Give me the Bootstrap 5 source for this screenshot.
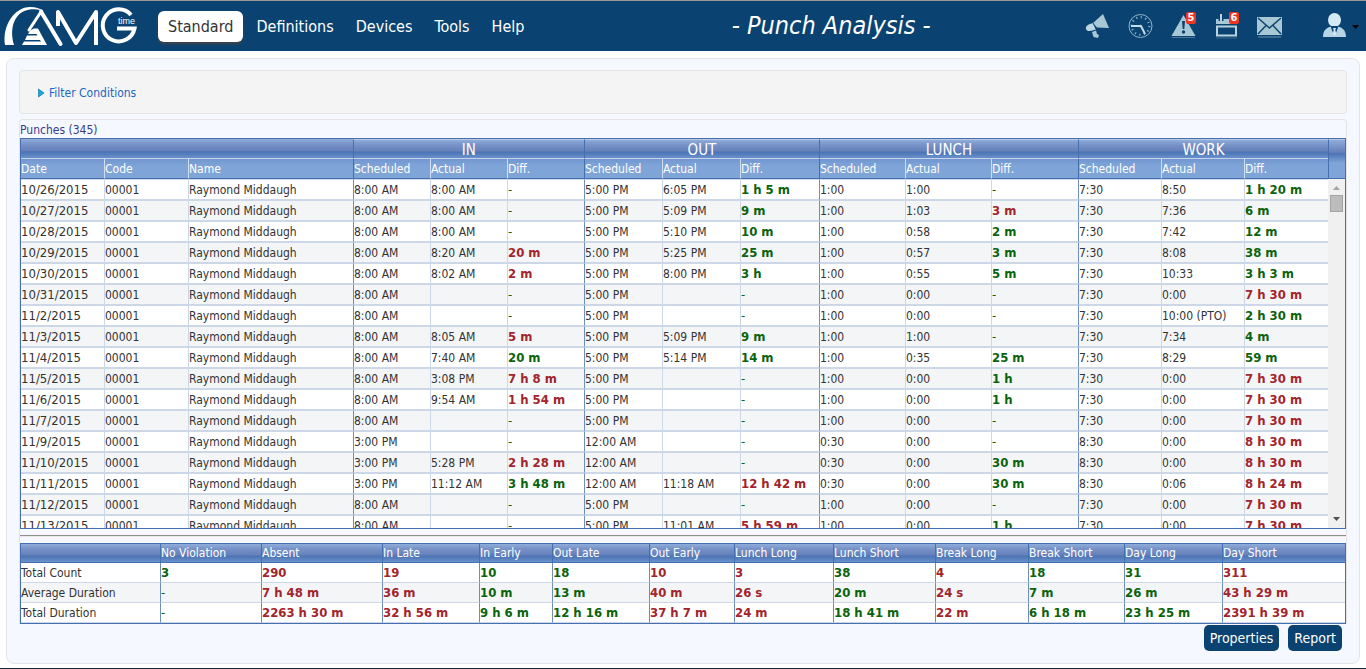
<!DOCTYPE html>
<html lang="en">
<head>
<meta charset="utf-8">
<meta name="viewport" content="width=device-width, initial-scale=1">
<title>Punch Analysis</title>
<link href="https://cdn.jsdelivr.net/npm/bootstrap@5.3.0/dist/css/bootstrap.min.css" rel="stylesheet">
<style>
:root{--navy:#0a4372;--edge:#466fb0;--rule:#ccd7e8;--group:#6d8fbf;--soft:#e2e4e8}
body{font-family:"DejaVu Sans Condensed","Noto Sans",sans-serif;font-size:12px;line-height:18px;color:#333;background:#fff}
.topbar{background:var(--navy);border-top:1px solid #999;height:51px;padding:0 7px 0 0}
.topbar .nav-link{color:#fff;font-size:16px;line-height:24px;padding:4px 11px 2px}
.topbar .nav-link.active{color:#333;background:#fff;border-radius:6px;padding:4px 10px 3px;margin-right:2px;box-shadow:0 2px 3px #444}
.page-title{font-size:25px;line-height:30px;font-style:italic;font-weight:400;color:#fff;padding-left:42px}
.tool{position:relative;width:25px;height:26px;padding:0;border:0;background:none;display:block}
.tool svg{display:block}
.tool .tally{position:absolute;top:-1px;right:0;width:10px;height:12px;border-radius:2px;background:#ee3425;color:#fff;font:bold 11px/12px "DejaVu Sans Condensed",sans-serif;text-align:center}
.user-btn{border:0;background:none;padding:0}
.frame{margin:7px 6px 4px;padding:11px 12px 12px;border:1px solid var(--soft);border-radius:8px;background:#f5f9ff}
.filter-box{background:#f4f4f4;border:1px solid #e4e4e4;border-radius:4px;height:44px;padding:2px 0 0 18px;margin-bottom:5px}
.filter-box a{color:#2266bf}
.panel{border:1px solid #e4e4e4;border-bottom:0;border-radius:4px 4px 0 0}
.panel-title{font-size:12px;line-height:16px;padding-top:2px;color:#3b3b8c;margin:0;font-weight:400}
.sheet{border:1px solid var(--edge)}
.sheet table{table-layout:fixed;width:100%;border-collapse:separate;border-spacing:0}
.sheet th,.sheet td{padding:0;white-space:nowrap;overflow:hidden;font-weight:400}
.sheet th{color:#fff}
.glossy,.summary thead th{background:linear-gradient(#8fadd9 0,#7994c9 25%,#6680ba 60%,#4c74b5 68%,#6a92cc 100%)}
.head th.glossy{height:20px;font-size:15px;line-height:16px;padding-top:2px;text-align:center;border-bottom:1px solid #c5d3ea}
.head th.span-group{border-left:1px solid var(--edge);border-top:1px solid #b8c9e6}
.head th.bar-cap{border-bottom:1px solid var(--edge);background:linear-gradient(#8fadd9 0,#6680ba 32%,#4c74b5 36%,#7fa4d8 60%,#7fa4d8 100%)}
.head th.sub{height:20px;line-height:17px;padding-top:2px;border-left:1px solid #d0dcf0;border-bottom:1px solid var(--edge);background:linear-gradient(#7297d0,#7fa4d8 35%)}
.head th.sub:first-child{border-left:0}
.head th.sub.lead-col{border-left-color:var(--edge)}
.rows{height:349px;overflow:hidden;background:#f0f0f0}
.rows td{height:21px;line-height:17px;padding-top:2px;background:#fff;border-left:1px solid var(--rule);border-top:1px solid var(--rule);border-bottom:1px solid var(--rule)}
.rows tr:nth-child(even) td{background:#f3f5f7}
.rows td:first-child{border-left:0;font-size:13px}
.rows td:first-child,.rows td.good,.rows td.bad{line-height:19px;padding-top:0}
.rows td.lead-col{border-left-color:var(--group)}
.good,.bad{font-size:13px}
.good{color:#0b630b}
.bad{color:#a3242c}
.sheet strong{font-weight:700}
.scroll-track{width:17px;flex:none;padding:7px 0 7px}
.scroll-track svg{display:block}
.scroll-thumb{width:13px;height:17px;background:#bcbcbc;border:1px solid #a3a3a3;margin-top:5px}
.c-date{width:83px}.c-code{width:84px}.c-in{width:77px}.c-out{width:78px}.c-outd{width:79px}.c-lun{width:86px}.c-lund{width:87px}.c-wrk{width:83px}.c-wrkd{width:84px}.c-bar{width:17px}
.splitter{border:0;border-top:1px solid #8f8f8f;border-bottom:1px solid #e8e8e8;opacity:1;margin:6px 0}
.summary thead th{height:19px;line-height:18px;border-left:1px solid var(--edge);border-bottom:1px solid var(--edge)}
.summary td{height:20px;line-height:19px;background:#fff;border-left:1px solid var(--group);border-bottom:1px solid var(--rule)}
.summary tbody th{color:#333;background:#fff;height:20px;line-height:17px;padding-top:2px;border-bottom:1px solid var(--rule)}
.summary tbody tr:nth-child(even) td,.summary tbody tr:nth-child(even) th{background:#f3f5f7}
.summary thead th:first-child{border-left:0}
.s-98{width:98px}.s-101{width:101px}.s-121{width:121px}.s-97{width:97px}.s-73{width:73px}.s-85{width:85px}.s-99{width:99px}.s-102{width:102px}.s-93{width:93px}.s-96{width:96px}.s-123{width:123px}
.actions{margin-top:1px;gap:9px;padding-right:5px}
.btn-navy,.btn-navy:hover{background:var(--navy);color:#fff;font-size:14px;line-height:26px;padding:0 6px;border:0;border-radius:5px}
.page-end{height:1px;background:#152c42}
</style>
</head>
<body>
<header class="topbar d-flex align-items-center">
  <a href="#" aria-label="AMG time" class="me-3"><svg width="138" height="50" viewBox="0 0 138 50" fill="none" stroke="#fff">
    <path d="M5 44C2 24 15 6 30 6C36 6 40 7.500 42 9.500C38 8.500 34 8 30 8.500C16 10 8.500 25 14 44Z" fill="#fff" stroke="none"/>
    <path d="M41 10.500 60.500 43" stroke-width="4" stroke-linecap="round"/>
    <path d="M41.500 10 29 29" stroke-width="3" stroke-linecap="round"/>
    <path d="M34 27.500H38L47 44H22L24 40.500H41L40 39H25L27 34.500H37.500L36.500 33H28L30 29.500Z" fill="#fff" stroke="none"/>
    <path d="M58 25V11L76 42 96 11V44" stroke-width="4" stroke-linejoin="round"/>
    <path d="M131 14A16 16 0 1 0 134.500 27.500H117" stroke-width="4"/>
    <text x="118" y="23" font-family="Liberation Sans, sans-serif" font-size="9" fill="#fff" stroke="none">time</text>
  </svg></a>
  <nav class="nav align-items-center ms-1">
    <a class="nav-link active" href="#" aria-current="page">Standard</a>
    <a class="nav-link" href="#">Definitions</a>
    <a class="nav-link" href="#">Devices</a>
    <a class="nav-link" href="#">Tools</a>
    <a class="nav-link" href="#">Help</a>
  </nav>
  <h1 class="page-title flex-grow-1 text-center text-nowrap mb-0">- Punch Analysis -</h1>
  <div class="d-flex align-items-center gap-3">
    <div class="d-flex" style="gap:18px">
      <button class="tool" type="button" aria-label="Announcements"><svg width="25" height="26" viewBox="0 0 25 26" fill="#a9c8d6"><path d="M18 1 24 15 12 14.500 8 10Z"/><path d="M8 10C4 11 0 13 1 16C2 19 6 18 9 17L11 16.500 8 10Z" fill="#bdd7e2"/><path d="M7 19 11 17.500 12 21 14 22 13 25 8.500 24Z"/><path d="M8 10 11.500 17" stroke="#0a4372" stroke-width=".8"/></svg></button>
      <button class="tool" type="button" aria-label="Time clock"><svg width="25" height="26" viewBox="0 0 25 26" fill="none" stroke="#8fb4c8"><circle cx="12.500" cy="13" r="11.500"/><circle cx="12.500" cy="13" r="8.800" stroke-width="2.200" stroke-dasharray="1.100 3.507"/><path d="M3 13H12" stroke="#c3dce6" stroke-width="2"/><path d="M13 13 17 21" stroke="#c3dce6" stroke-width="2"/><circle cx="12.500" cy="13" r="1.300" fill="#c3dce6" stroke="none"/></svg></button>
      <button class="tool" type="button" aria-label="Alerts"><svg width="25" height="26" viewBox="0 0 25 26"><path d="M12.500 2 24.500 23H.5Z" fill="#a9c8d6"/><path d="M11 8h3l-.7 8h-1.600Z" fill="#0a4372"/><circle cx="12.500" cy="19" r="1.700" fill="#0a4372"/><path d="M1 24.500h23" stroke="#4d7797"/></svg><span class="tally">5</span></button>
      <button class="tool" type="button" aria-label="Calendar"><svg width="25" height="26" viewBox="0 0 25 26"><path d="M2 6h21v5H2Z" fill="#a9c8d6"/><path d="M3 13.500h19v9H3Z" fill="none" stroke="#b9d3df" stroke-width="2"/><path d="M7 1v7" stroke="#0a4372" stroke-width="5"/><path d="M7 1v7" stroke="#b9d3df" stroke-width="2"/><path d="M2 25h21" stroke="#3d6a8c"/></svg><span class="tally">6</span></button>
      <button class="tool" type="button" aria-label="Messages"><svg width="25" height="26" viewBox="0 0 25 26"><path d="M0 4h25v18H0Z" fill="#a9c8d6"/><path d="M1 5 12.500 15 24 5M1 21 9 12.500M24 21 16 12.500" fill="none" stroke="#0f466f" stroke-width="1.500"/><path d="M1 24h23" stroke="#3d6a8c" stroke-width="2"/></svg></button>
    </div>
    <button class="user-btn d-flex align-items-center ms-4" type="button" aria-label="Account"><svg width="37" height="26" viewBox="0 0 37 26"><path d="M1 24C1 17 5 14.500 9 13.500L12.500 22 16 13.500C20 14.500 24 17 24 24Z" fill="#b5d4e4"/><ellipse cx="12.500" cy="7" rx="6.500" ry="7" fill="#d3eaf5"/><path d="M8.500 13 12.500 24 16.500 13Z" fill="#0a4372"/><path d="M11 15h3l-.7 2 1 4-1.800 3-1.800-3 1-4Z" fill="#d3eaf5"/><path d="M30 12h7l-3.500 4Z" fill="#000"/></svg></button>
  </div>
</header>

<main class="frame">
  <section class="filter-box d-flex align-items-center">
    <a href="#" class="d-flex align-items-center text-decoration-none"><svg width="11" height="10" viewBox="0 0 11 10"><path d="M.5 1 6 5 .5 9Z" fill="#1ba5d8" stroke="#1679a8" stroke-width=".7"/></svg>Filter Conditions</a>
  </section>
  <section class="panel">
    <h2 class="panel-title">Punches (345)</h2>
    <div class="sheet">
      <table class="head">
        <colgroup><col class="c-date"><col class="c-code"><col><col class="c-in"><col class="c-in"><col class="c-in"><col class="c-out"><col class="c-out"><col class="c-outd"><col class="c-lun"><col class="c-lun"><col class="c-lund"><col class="c-wrk"><col class="c-wrk"><col class="c-wrkd"><col class="c-bar"></colgroup>
        <tr><th class="glossy" colspan="3"></th><th class="glossy span-group" colspan="3">IN</th><th class="glossy span-group" colspan="3">OUT</th><th class="glossy span-group" colspan="3">LUNCH</th><th class="glossy span-group" colspan="3">WORK</th><th class="bar-cap span-group" rowspan="2"></th></tr>
        <tr><th class="sub">Date</th><th class="sub">Code</th><th class="sub">Name</th><th class="sub lead-col">Scheduled</th><th class="sub">Actual</th><th class="sub">Diff.</th><th class="sub lead-col">Scheduled</th><th class="sub">Actual</th><th class="sub">Diff.</th><th class="sub lead-col">Scheduled</th><th class="sub">Actual</th><th class="sub">Diff.</th><th class="sub lead-col">Scheduled</th><th class="sub">Actual</th><th class="sub">Diff.</th></tr>
      </table>
      <div class="rows d-flex">
        <div class="flex-grow-1">
          <table>
            <colgroup><col class="c-date"><col class="c-code"><col><col class="c-in"><col class="c-in"><col class="c-in"><col class="c-out"><col class="c-out"><col class="c-outd"><col class="c-lun"><col class="c-lun"><col class="c-lund"><col class="c-wrk"><col class="c-wrk"><col class="c-wrkd"></colgroup>
            <tbody id="punches"></tbody>
          </table>
        </div>
        <div class="scroll-track d-flex flex-column align-items-center">
          <svg width="7" height="4" viewBox="0 0 7 4"><path d="M0 4h7L3.500 0Z" fill="#a3a3a3"/></svg>
          <div class="scroll-thumb"></div>
          <svg class="mt-auto" width="7" height="4" viewBox="0 0 7 4"><path d="M0 0h7L3.500 4Z" fill="#505050"/></svg>
        </div>
      </div>
    </div>
    <hr class="splitter">
    <div class="sheet">
      <table class="summary">
        <colgroup><col><col class="s-101"><col class="s-121"><col class="s-97"><col class="s-73"><col class="s-97"><col class="s-85"><col class="s-99"><col class="s-102"><col class="s-93"><col class="s-96"><col class="s-98"><col class="s-123"></colgroup>
        <thead><tr><th></th><th>No Violation</th><th>Absent</th><th>In Late</th><th>In Early</th><th>Out Late</th><th>Out Early</th><th>Lunch Long</th><th>Lunch Short</th><th>Break Long</th><th>Break Short</th><th>Day Long</th><th>Day Short</th></tr></thead>
        <tbody id="totals"></tbody>
      </table>
    </div>
  </section>
  <div class="actions d-flex justify-content-end">
    <button type="button" class="btn btn-navy">Properties</button>
    <button type="button" class="btn btn-navy">Report</button>
  </div>
</main>
<div class="page-end"></div>

<script>
// Each line: date | in scheduled, actual, diff | out ... | lunch ... | work ...
// A diff that starts with "!" is a violation.
const punches = `10/26/2015|8:00 AM|8:00 AM|-|5:00 PM|6:05 PM|1 h 5 m|1:00|1:00|-|7:30|8:50|1 h 20 m
10/27/2015|8:00 AM|8:00 AM|-|5:00 PM|5:09 PM|9 m|1:00|1:03|!3 m|7:30|7:36|6 m
10/28/2015|8:00 AM|8:00 AM|-|5:00 PM|5:10 PM|10 m|1:00|0:58|2 m|7:30|7:42|12 m
10/29/2015|8:00 AM|8:20 AM|!20 m|5:00 PM|5:25 PM|25 m|1:00|0:57|3 m|7:30|8:08|38 m
10/30/2015|8:00 AM|8:02 AM|!2 m|5:00 PM|8:00 PM|3 h|1:00|0:55|5 m|7:30|10:33|3 h 3 m
10/31/2015|8:00 AM||-|5:00 PM||-|1:00|0:00|-|7:30|0:00|!7 h 30 m
11/2/2015|8:00 AM||-|5:00 PM||-|1:00|0:00|-|7:30|10:00 (PTO)|2 h 30 m
11/3/2015|8:00 AM|8:05 AM|!5 m|5:00 PM|5:09 PM|9 m|1:00|1:00|-|7:30|7:34|4 m
11/4/2015|8:00 AM|7:40 AM|20 m|5:00 PM|5:14 PM|14 m|1:00|0:35|25 m|7:30|8:29|59 m
11/5/2015|8:00 AM|3:08 PM|!7 h 8 m|5:00 PM||-|1:00|0:00|1 h|7:30|0:00|!7 h 30 m
11/6/2015|8:00 AM|9:54 AM|!1 h 54 m|5:00 PM||-|1:00|0:00|1 h|7:30|0:00|!7 h 30 m
11/7/2015|8:00 AM||-|5:00 PM||-|1:00|0:00|-|7:30|0:00|!7 h 30 m
11/9/2015|3:00 PM||-|12:00 AM||-|0:30|0:00|-|8:30|0:00|!8 h 30 m
11/10/2015|3:00 PM|5:28 PM|!2 h 28 m|12:00 AM||-|0:30|0:00|30 m|8:30|0:00|!8 h 30 m
11/11/2015|3:00 PM|11:12 AM|3 h 48 m|12:00 AM|11:18 AM|!12 h 42 m|0:30|0:00|30 m|8:30|0:06|!8 h 24 m
11/12/2015|8:00 AM||-|5:00 PM||-|1:00|0:00|-|7:30|0:00|!7 h 30 m
11/13/2015|8:00 AM||-|5:00 PM|11:01 AM|!5 h 59 m|1:00|0:00|1 h|7:30|0:00|!7 h 30 m`;
const totals = `Total Count|3|!290|!19|10|18|!10|!3|38|!4|18|31|!311
Average Duration|-|!7 h 48 m|!36 m|10 m|13 m|!40 m|!26 s|20 m|!24 s|7 m|26 m|!43 h 29 m
Total Duration|-|!2263 h 30 m|!32 h 56 m|9 h 6 m|12 h 16 m|!37 h 7 m|!24 m|18 h 41 m|!22 m|6 h 18 m|23 h 25 m|!2391 h 39 m`;
const diff = t => t === '-' ? '<td class="good">-</td>'
  : t[0] === '!' ? `<td class="bad"><strong>${t.slice(1)}</strong></td>` : `<td class="good"><strong>${t}</strong></td>`;
document.getElementById('punches').innerHTML = punches.split('\n').map(line => {
  const [date, ...v] = line.split('|');
  return `<tr><td>${date}</td><td>00001</td><td>Raymond Middaugh</td>` +
    v.map((t, i) => i % 3 === 2 ? diff(t) : i % 3 ? `<td>${t}</td>` : `<td class="lead-col">${t}</td>`).join('') + '</tr>';
}).join('');
document.getElementById('totals').innerHTML = totals.split('\n').map(line => {
  const [name, ...v] = line.split('|');
  return `<tr><th scope="row">${name}</th>${v.map(diff).join('')}</tr>`;
}).join('');
</script>
<script src="https://cdn.jsdelivr.net/npm/bootstrap@5.3.0/dist/js/bootstrap.bundle.min.js"></script>
</body>
</html>
